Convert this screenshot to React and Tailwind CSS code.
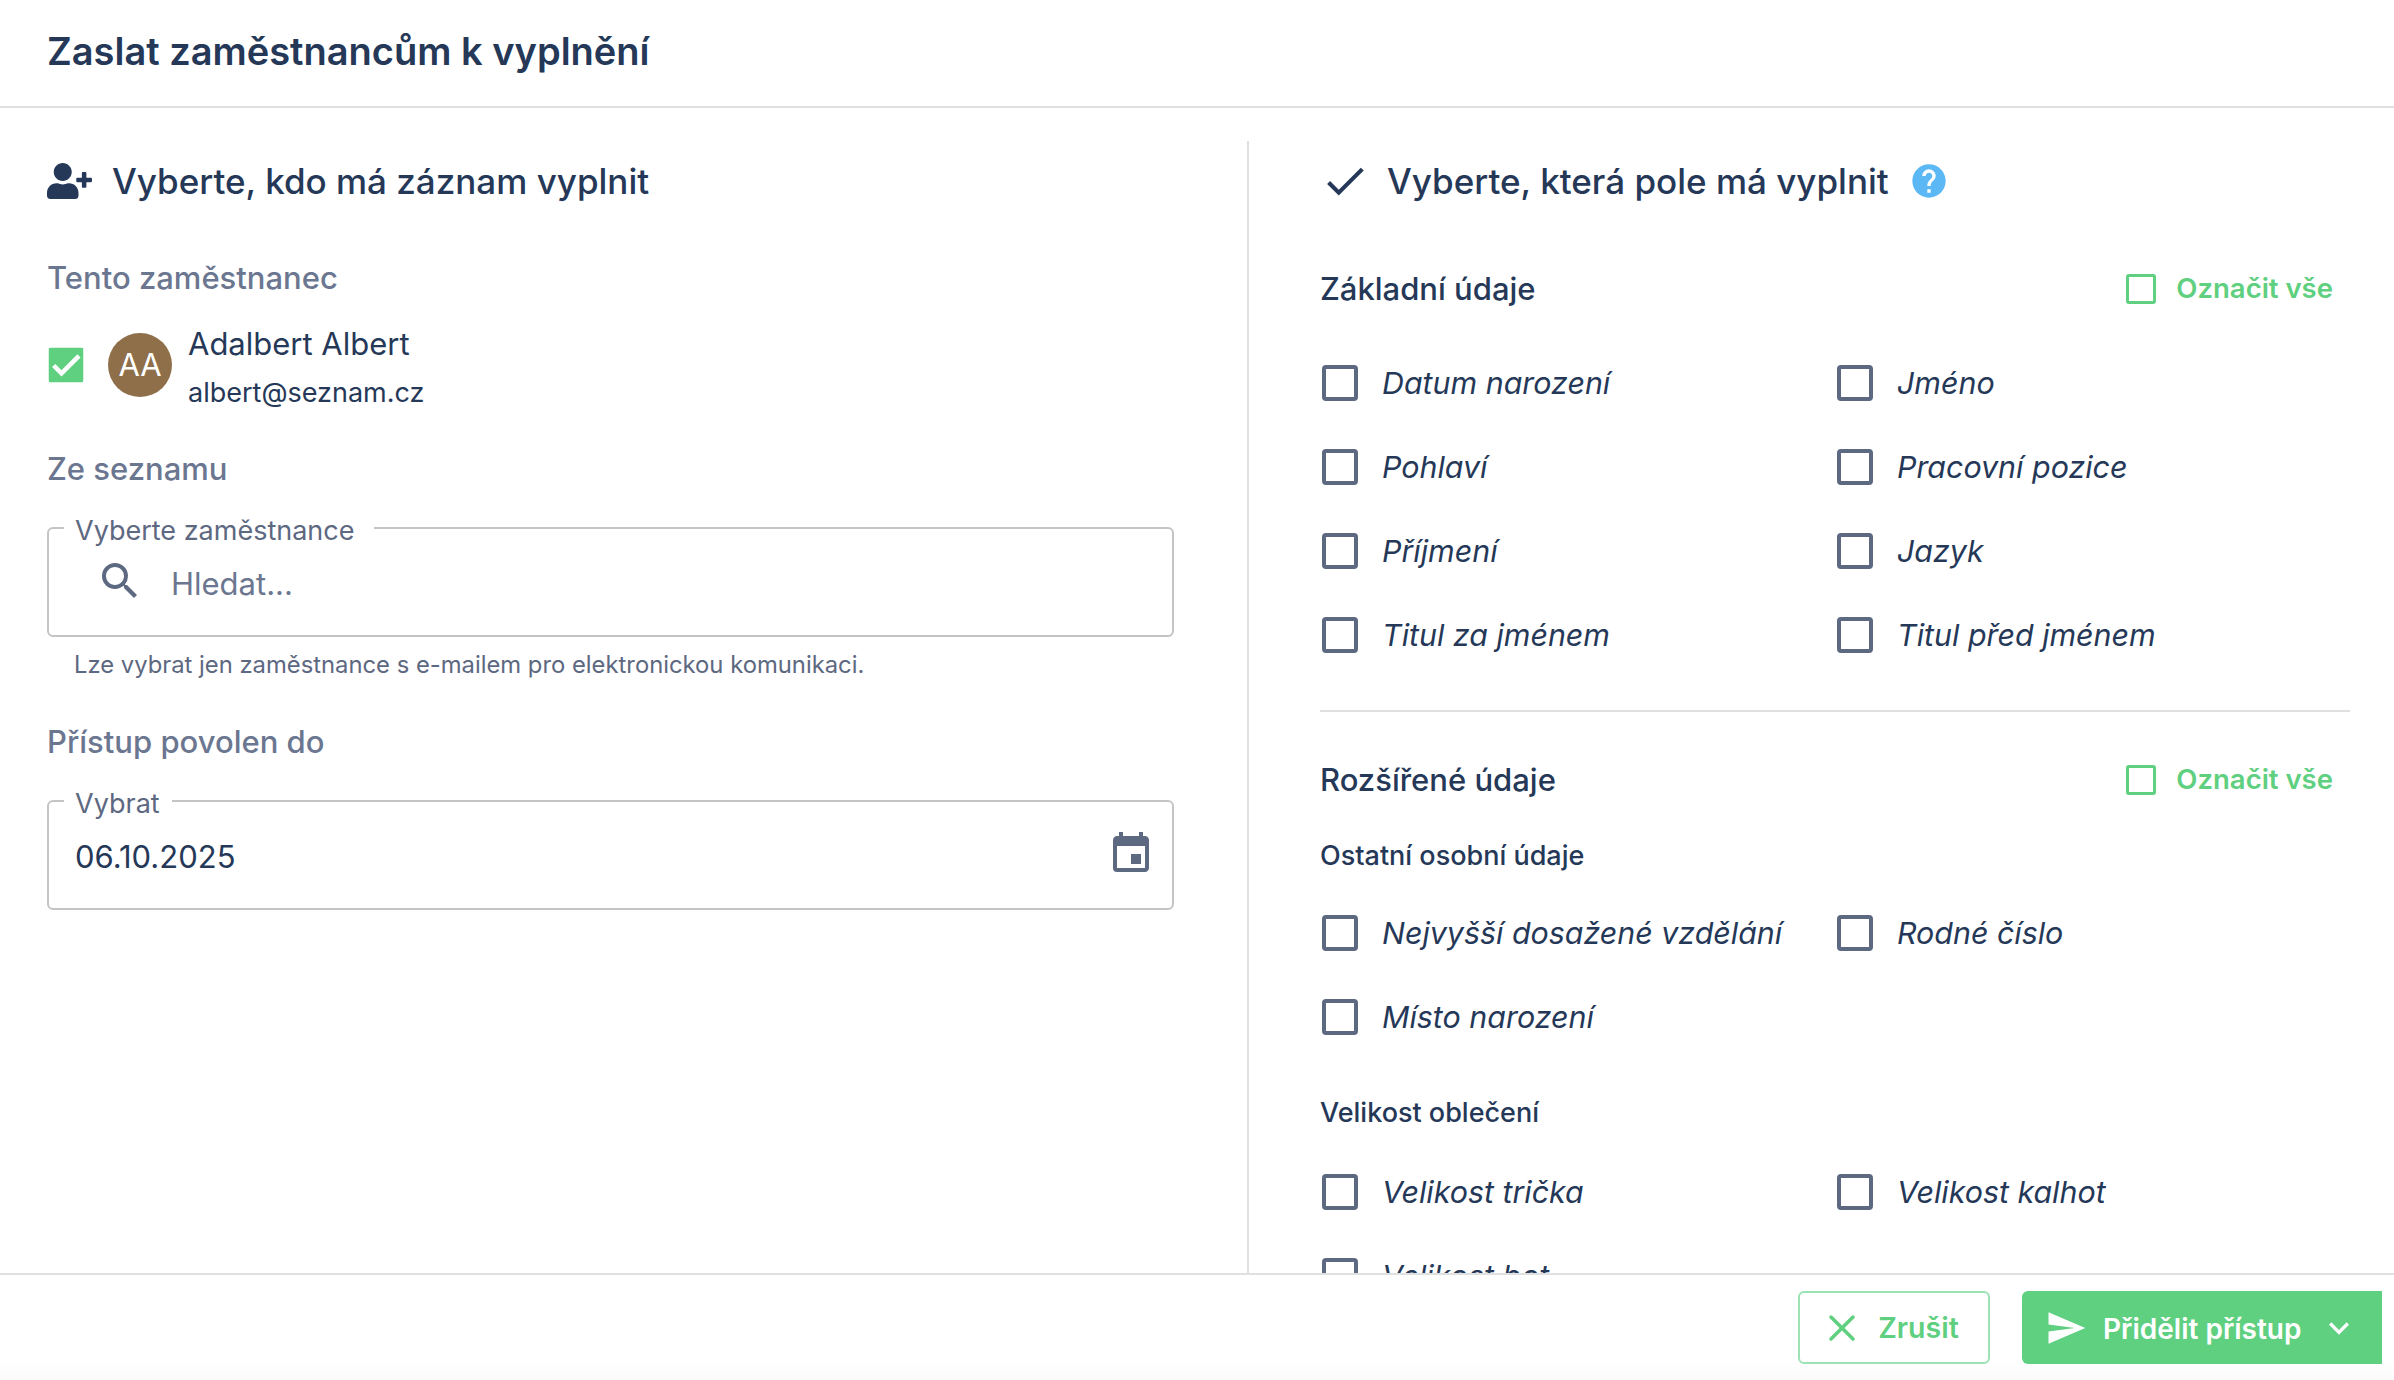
import { FaUserPlus } from 'react-icons/fa'
import { MdCheck, MdEvent, MdExpandMore, MdHelp, MdSearch, MdSend } from 'react-icons/md'
import { X } from 'lucide-react'

const basicFields = [
    ['Datum narození', 'Jméno'],
    ['Pohlaví', 'Pracovní pozice'],
    ['Příjmení', 'Jazyk'],
    ['Titul za jménem', 'Titul před jménem'],
]
const otherFields = [
    ['Nejvyšší dosažené vzdělání', 'Rodné číslo'],
    ['Místo narození', null],
]
const clothesFields = [
    ['Velikost trička', 'Velikost kalhot'],
    ['Velikost bot', null],
]

function FieldCheck({ label }) {
    return (
        <label className="flex h-[84px] items-center gap-[24px] pl-[2px]">
            <span className="h-[36px] w-[36px] shrink-0 rounded-[4px] border-[4px] border-[#5d6881]" />
            <span className="mt-[2px] whitespace-nowrap text-[30.4px] italic text-[#253858]">{label}</span>
        </label>
    )
}

function FieldGrid({ rows, className }) {
    return (
        <div className={className}>
            {rows.map((row) => (
                <div key={row[0]} className="grid grid-cols-[515px_1fr]">
                    <FieldCheck label={row[0]} />
                    {row[1] && <FieldCheck label={row[1]} />}
                </div>
            ))}
        </div>
    )
}

function GroupHeader({ title, className }) {
    return (
        <div className={`flex h-[40px] items-center justify-between pr-[17px] ${className}`}>
            <span className="text-[31px] font-medium leading-[40px] text-[#253858]">{title}</span>
            <span className="flex items-center gap-[20px]">
                <span className="h-[30px] w-[30px] rounded-[3px] border-[3px] border-[#5fcf80]" />
                <span className="text-[27.5px] font-semibold text-[#5fcf80]">Označit vše</span>
            </span>
        </div>
    )
}

function SubLabel({ children, className }) {
    return <div className={`h-[40px] text-[27px] font-medium leading-[40px] text-[#253858] ${className}`}>{children}</div>
}

function OutlinedField({ legend, legendClass, children, className }) {
    return (
        <fieldset className={`h-[127px] w-[1127px] rounded-[6px] border-2 border-[#c4c4c4] p-0 ${className}`}>
            <legend className={`ml-[15px] pl-[11px] pt-[6px] text-[27px] leading-[30px] text-[#5d6881] ${legendClass}`}>{legend}</legend>
            <div className="flex h-[76px] items-center">{children}</div>
        </fieldset>
    )
}

function SectionLabel({ children, className }) {
    return <div className={`h-[40px] text-[31px] font-medium leading-[40px] text-[#6b7690] ${className}`}>{children}</div>
}

export default function App() {
    return (
        <div className="flex h-screen flex-col overflow-hidden bg-white font-['Inter',sans-serif] text-[#253858]">
            <header className="flex h-[108px] shrink-0 items-center border-b-2 border-[#e0e0e0] pb-[4px] pl-[47px]">
                <h1 className="text-[38px] font-semibold">Zaslat zaměstnancům k vyplnění</h1>
            </header>

            <main className="flex min-h-0 flex-1 pt-[33px]">
                <section className="w-[1247px] shrink-0 pl-[47px] pt-[18px]">
                    <div className="flex h-[44px] items-center gap-[20px]">
                        <FaUserPlus className="h-[36px] w-[45px] text-[#253858]" />
                        <h2 className="text-[35px] font-medium">Vyberte, kdo má záznam vyplnit</h2>
                    </div>

                    <SectionLabel className="mt-[55px]">Tento zaměstnanec</SectionLabel>

                    <div className="mt-[23px] flex items-start">
                        <span className="ml-[1px] mt-[26px] flex h-[36px] w-[36px] items-center justify-center rounded-[4px] bg-[#5fcf80]">
                            <MdCheck className="h-[38px] w-[38px] text-white" stroke="currentColor" strokeWidth={1} />
                        </span>
                        <span className="ml-[24px] mt-[12px] flex h-[64px] w-[64px] items-center justify-center rounded-full bg-[#8f6f4a] text-[31px] text-white">
                            AA
                        </span>
                        <div className="ml-[16px]">
                            <div className="text-[31px] leading-[46px]">Adalbert Albert</div>
                            <div className="text-[27px] leading-[52px]">albert@seznam.cz</div>
                        </div>
                    </div>

                    <SectionLabel className="mt-[30px]">Ze seznamu</SectionLabel>

                    <OutlinedField legend="Vyberte zaměstnance" legendClass="pr-[20px]" className="mt-[21px]">
                        <MdSearch className="mb-[6px] ml-[47px] h-[48px] w-[48px] text-[#5d6881]" />
                        <span className="ml-[27px] text-[31px] text-[#6b7690]">Hledat...</span>
                    </OutlinedField>

                    <div className="ml-[27px] mt-[12px] h-[32px] text-[23.8px] leading-[32px] text-[#5d6881]">
                        Lze vybrat jen zaměstnance s e-mailem pro elektronickou komunikaci.
                    </div>

                    <SectionLabel className="mt-[41px]">Přístup povolen do</SectionLabel>

                    <OutlinedField legend="Vybrat" legendClass="pr-[12px]" className="mt-[21px]">
                        <span className="ml-[26px] text-[31px] text-[#253858]">06.10.2025</span>
                        <MdEvent className="mb-[6px] ml-auto mr-[17px] h-[48px] w-[48px] text-[#5d6881]" />
                    </OutlinedField>
                </section>

                <section className="min-w-0 flex-1 overflow-hidden border-l-2 border-[#e0e0e0] pl-[71px] pr-[44px] pt-[18px]">
                    <div className="flex h-[44px] items-center">
                        <MdCheck className="h-[50px] w-[50px] text-[#253858]" />
                        <h2 className="ml-[17px] text-[35px] font-medium">Vyberte, která pole má vyplnit</h2>
                        <MdHelp className="ml-[20px] h-[40px] w-[40px] text-[#5cb8f5]" />
                    </div>

                    <GroupHeader title="Základní údaje" className="mt-[66px]" />
                    <FieldGrid rows={basicFields} className="mt-[32px]" />

                    <div className="mt-[33px] h-[2px] bg-[#e0e0e0]" />

                    <GroupHeader title="Rozšířené údaje" className="mt-[48px]" />
                    <SubLabel className="mt-[36px]">Ostatní osobní údaje</SubLabel>
                    <FieldGrid rows={otherFields} className="mt-[15px]" />
                    <SubLabel className="mt-[34px]">Velikost oblečení</SubLabel>
                    <FieldGrid rows={clothesFields} className="mt-[17px]" />
                </section>
            </main>

            <footer className="flex h-[107px] shrink-0 items-start justify-end gap-[32px] border-t-2 border-[#e0e0e0] bg-linear-to-b from-white from-80% to-[#fbfbfb] pr-[12px] pt-[16px]">
                <button className="flex h-[73px] w-[192px] items-center justify-center gap-[14px] rounded-[6px] border-2 border-[#9be3b5] text-[28.5px] font-semibold text-[#5fcf80]">
                    <X className="-mx-[9px] h-[44px] w-[44px]" strokeWidth={1.9} />
                    <span className="ml-[9px] mt-[2px]">Zrušit</span>
                </button>
                <button className="flex h-[73px] w-[360px] items-center rounded-l-[6px] bg-[#5fcf80] pl-[23px] text-[28px] font-semibold text-white">
                    <MdSend className="h-[42px] w-[42px]" />
                    <span className="ml-[16px] mt-[2px]">Přidělit přístup</span>
                    <MdExpandMore className="ml-[18px] h-[40px] w-[40px]" />
                </button>
            </footer>
        </div>
    )
}
